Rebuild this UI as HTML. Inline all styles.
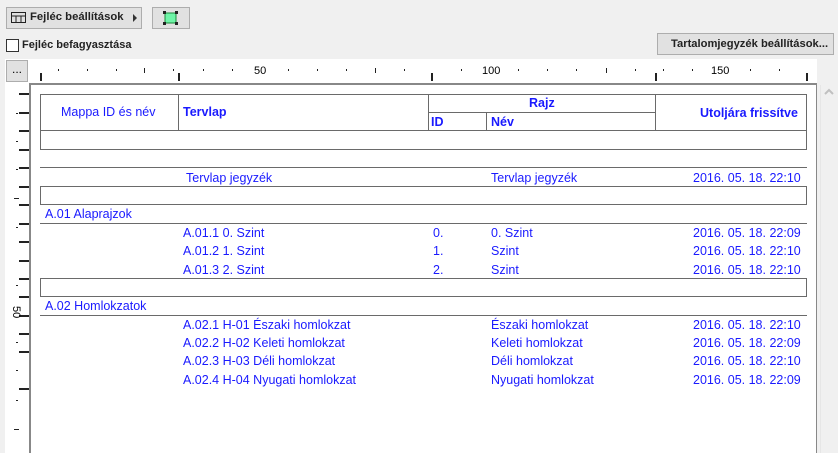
<!DOCTYPE html>
<html><head><meta charset="utf-8"><style>
*{margin:0;padding:0;box-sizing:border-box}
body{width:838px;height:453px;background:#f0f0f0;position:relative;overflow:hidden;font-family:"Liberation Sans",Arial,sans-serif;font-size:12px;color:#000}
.a{position:absolute}
.btn{position:absolute;background:#e1e1e1;border:1px solid #adadad}
.t{position:absolute;color:#1a1aff;font-size:12.5px;white-space:nowrap;line-height:14px}
.b{font-weight:bold}
.h{position:absolute;height:1px;background:#6a6a6a}
.v{position:absolute;width:1px;background:#6a6a6a}
.tk{position:absolute;background:#222}
</style></head><body>
<div class="btn" style="left:6px;top:7px;width:136px;height:22px"></div>
<svg class="a" style="left:11px;top:12px" width="16" height="12"><rect x="0.5" y="0.5" width="14" height="10" fill="none" stroke="#222"/><line x1="0" y1="4" x2="15" y2="4" stroke="#222"/><line x1="5" y1="4" x2="5" y2="11" stroke="#222"/><line x1="10" y1="4" x2="10" y2="11" stroke="#222"/></svg>
<div class="a" style="left:30px;top:11px;font-size:11.3px;font-weight:bold;color:#222">Fejléc beállítások</div>
<div class="a" style="left:133px;top:14px;width:0;height:0;border-left:4px solid #333;border-top:4px solid transparent;border-bottom:4px solid transparent"></div>
<div class="btn" style="left:152px;top:7px;width:38px;height:22px"></div>
<svg class="a" style="left:163px;top:11px" width="16" height="15"><rect x="2" y="2" width="11" height="10" fill="#6ef5a8" stroke="#1a8a3a"/><rect x="0" y="0" width="3" height="3" fill="#222"/><rect x="12" y="0" width="3" height="3" fill="#222"/><rect x="0" y="11" width="3" height="3" fill="#222"/><rect x="12" y="11" width="3" height="3" fill="#222"/></svg>
<div class="a" style="left:6px;top:39px;width:13px;height:13px;border:1px solid #333;background:#fff"></div>
<div class="a" style="left:22px;top:39px;font-size:11px;font-weight:bold;color:#222">Fejléc befagyasztása</div>
<div class="btn" style="left:657px;top:33px;width:177px;height:22px"></div>
<div class="a" style="left:671px;top:38px;font-size:11.2px;font-weight:bold;color:#222">Tartalomjegyzék beállítások...</div>
<div class="a" style="left:5px;top:59px;width:812px;height:394px;background:#fff"></div>
<div class="btn" style="left:6px;top:60px;width:22px;height:22px;background:#e1e1e1"></div>
<div class="a" style="left:12px;top:62px;font-size:12px">...</div>
<div class="a" style="left:29px;top:83px;width:788px;height:2px;background:#888"></div>
<div class="a" style="left:29px;top:83px;width:2px;height:370px;background:#888"></div>
<div class="a" style="left:816px;top:85px;width:1px;height:368px;background:#888"></div>
<div class="a" style="left:820px;top:85px;width:1px;height:368px;background:#e6e6e6"></div>
<svg class="a" style="left:824px;top:88px" width="10" height="8"><path d="M1 6 L5 2 L9 6" fill="none" stroke="#c0c0c0" stroke-width="2"/></svg>
<div class="tk" style="left:40px;top:73px;width:2px;height:8px"></div>
<div class="tk" style="left:178px;top:73px;width:2px;height:8px"></div>
<div class="tk" style="left:431px;top:73px;width:2px;height:8px"></div>
<div class="tk" style="left:655px;top:73px;width:2px;height:8px"></div>
<div class="tk" style="left:806px;top:73px;width:2px;height:8px"></div>
<div class="tk" style="left:58px;top:69px;width:1px;height:2px"></div>
<div class="tk" style="left:87px;top:69px;width:1px;height:2px"></div>
<div class="tk" style="left:116px;top:69px;width:1px;height:2px"></div>
<div class="tk" style="left:144px;top:68px;width:1px;height:5px"></div>
<div class="tk" style="left:173px;top:69px;width:1px;height:2px"></div>
<div class="tk" style="left:203px;top:69px;width:1px;height:2px"></div>
<div class="tk" style="left:232px;top:69px;width:1px;height:2px"></div>
<div class="tk" style="left:288px;top:69px;width:1px;height:2px"></div>
<div class="tk" style="left:317px;top:69px;width:1px;height:2px"></div>
<div class="tk" style="left:346px;top:69px;width:1px;height:2px"></div>
<div class="tk" style="left:375px;top:68px;width:1px;height:5px"></div>
<div class="tk" style="left:404px;top:69px;width:1px;height:2px"></div>
<div class="tk" style="left:461px;top:69px;width:1px;height:2px"></div>
<div class="tk" style="left:518px;top:69px;width:1px;height:2px"></div>
<div class="tk" style="left:547px;top:69px;width:1px;height:2px"></div>
<div class="tk" style="left:576px;top:69px;width:1px;height:2px"></div>
<div class="tk" style="left:606px;top:68px;width:1px;height:5px"></div>
<div class="tk" style="left:635px;top:69px;width:1px;height:2px"></div>
<div class="tk" style="left:663px;top:69px;width:1px;height:2px"></div>
<div class="tk" style="left:692px;top:69px;width:1px;height:2px"></div>
<div class="tk" style="left:750px;top:69px;width:1px;height:2px"></div>
<div class="tk" style="left:779px;top:69px;width:1px;height:2px"></div>
<div class="a" style="left:254px;top:65px;font-size:11px">50</div>
<div class="a" style="left:482px;top:65px;font-size:11px">100</div>
<div class="a" style="left:711px;top:65px;font-size:11px">150</div>
<div class="tk" style="left:19px;top:93px;width:10px;height:2px"></div>
<div class="tk" style="left:19px;top:112px;width:10px;height:2px"></div>
<div class="tk" style="left:19px;top:130px;width:10px;height:2px"></div>
<div class="tk" style="left:19px;top:149px;width:10px;height:2px"></div>
<div class="tk" style="left:19px;top:167px;width:10px;height:2px"></div>
<div class="tk" style="left:19px;top:186px;width:10px;height:2px"></div>
<div class="tk" style="left:19px;top:204px;width:10px;height:2px"></div>
<div class="tk" style="left:19px;top:223px;width:10px;height:2px"></div>
<div class="tk" style="left:19px;top:241px;width:10px;height:2px"></div>
<div class="tk" style="left:19px;top:260px;width:10px;height:2px"></div>
<div class="tk" style="left:19px;top:278px;width:10px;height:2px"></div>
<div class="tk" style="left:19px;top:296px;width:10px;height:2px"></div>
<div class="tk" style="left:19px;top:315px;width:10px;height:2px"></div>
<div class="tk" style="left:19px;top:333px;width:10px;height:2px"></div>
<div class="tk" style="left:19px;top:351px;width:10px;height:2px"></div>
<div class="tk" style="left:19px;top:388px;width:10px;height:2px"></div>
<div class="tk" style="left:16px;top:113px;width:2px;height:1px"></div>
<div class="tk" style="left:16px;top:141px;width:2px;height:1px"></div>
<div class="tk" style="left:16px;top:169px;width:2px;height:1px"></div>
<div class="tk" style="left:14px;top:198px;width:5px;height:1px"></div>
<div class="tk" style="left:16px;top:227px;width:2px;height:1px"></div>
<div class="tk" style="left:16px;top:285px;width:2px;height:1px"></div>
<div class="tk" style="left:16px;top:342px;width:2px;height:1px"></div>
<div class="tk" style="left:16px;top:370px;width:2px;height:1px"></div>
<div class="tk" style="left:16px;top:400px;width:2px;height:1px"></div>
<div class="tk" style="left:14px;top:429px;width:5px;height:1px"></div>
<div class="a" style="top:306px;font-size:11px;transform:rotate(90deg);transform-origin:left top;left:22px">50</div>
<!-- table -->
<div class="h" style="left:40px;top:94px;width:767px"></div>
<div class="h" style="left:428px;top:112px;width:227px"></div>
<div class="h" style="left:40px;top:130px;width:767px"></div>
<div class="h" style="left:40px;top:149px;width:767px"></div>
<div class="v" style="left:40px;top:94px;height:55px"></div>
<div class="v" style="left:806px;top:94px;height:55px"></div>
<div class="v" style="left:178px;top:94px;height:36px"></div>
<div class="v" style="left:428px;top:94px;height:36px"></div>
<div class="v" style="left:486px;top:112px;height:18px"></div>
<div class="v" style="left:655px;top:94px;height:36px"></div>
<div class="t" style="left:61px;top:105px">Mappa ID és név</div>
<div class="t b" style="left:183px;top:105px">Tervlap</div>
<div class="t b" style="left:529px;top:96px">Rajz</div>
<div class="t b" style="left:431px;top:115px">ID</div>
<div class="t b" style="left:491px;top:115px">Név</div>
<div class="t b" style="left:700px;top:106px">Utoljára frissítve</div>
<div class="h" style="left:40px;top:167px;width:767px"></div>
<div class="t" style="left:186px;top:171px">Tervlap jegyzék</div>
<div class="t" style="left:491px;top:171px">Tervlap jegyzék</div>
<div class="t" style="left:693px;top:171px">2016. 05. 18. 22:10</div>
<div class="h" style="left:40px;top:186px;width:767px"></div>
<div class="h" style="left:40px;top:204px;width:767px"></div>
<div class="v" style="left:40px;top:186px;height:19px"></div>
<div class="v" style="left:806px;top:186px;height:19px"></div>
<div class="t" style="left:45px;top:207px">A.01 Alaprajzok</div>
<div class="h" style="left:40px;top:223px;width:767px"></div>
<div class="t" style="left:183px;top:226px">A.01.1 0. Szint</div>
<div class="t" style="left:433px;top:226px">0.</div>
<div class="t" style="left:491px;top:226px">0. Szint</div>
<div class="t" style="left:693px;top:226px">2016. 05. 18. 22:09</div>
<div class="t" style="left:183px;top:244px">A.01.2 1. Szint</div>
<div class="t" style="left:433px;top:244px">1.</div>
<div class="t" style="left:491px;top:244px">Szint</div>
<div class="t" style="left:693px;top:244px">2016. 05. 18. 22:10</div>
<div class="t" style="left:183px;top:263px">A.01.3 2. Szint</div>
<div class="t" style="left:433px;top:263px">2.</div>
<div class="t" style="left:491px;top:263px">Szint</div>
<div class="t" style="left:693px;top:263px">2016. 05. 18. 22:10</div>
<div class="h" style="left:40px;top:278px;width:767px"></div>
<div class="h" style="left:40px;top:296px;width:767px"></div>
<div class="v" style="left:40px;top:278px;height:19px"></div>
<div class="v" style="left:806px;top:278px;height:19px"></div>
<div class="t" style="left:45px;top:299px">A.02 Homlokzatok</div>
<div class="h" style="left:40px;top:315px;width:767px"></div>
<div class="t" style="left:183px;top:318px">A.02.1 H-01 Északi homlokzat</div>
<div class="t" style="left:491px;top:318px">Északi homlokzat</div>
<div class="t" style="left:693px;top:318px">2016. 05. 18. 22:10</div>
<div class="t" style="left:183px;top:336px">A.02.2 H-02 Keleti homlokzat</div>
<div class="t" style="left:491px;top:336px">Keleti homlokzat</div>
<div class="t" style="left:693px;top:336px">2016. 05. 18. 22:09</div>
<div class="t" style="left:183px;top:354px">A.02.3 H-03 Déli homlokzat</div>
<div class="t" style="left:491px;top:354px">Déli homlokzat</div>
<div class="t" style="left:693px;top:354px">2016. 05. 18. 22:10</div>
<div class="t" style="left:183px;top:373px">A.02.4 H-04 Nyugati homlokzat</div>
<div class="t" style="left:491px;top:373px">Nyugati homlokzat</div>
<div class="t" style="left:693px;top:373px">2016. 05. 18. 22:09</div>
</body></html>
